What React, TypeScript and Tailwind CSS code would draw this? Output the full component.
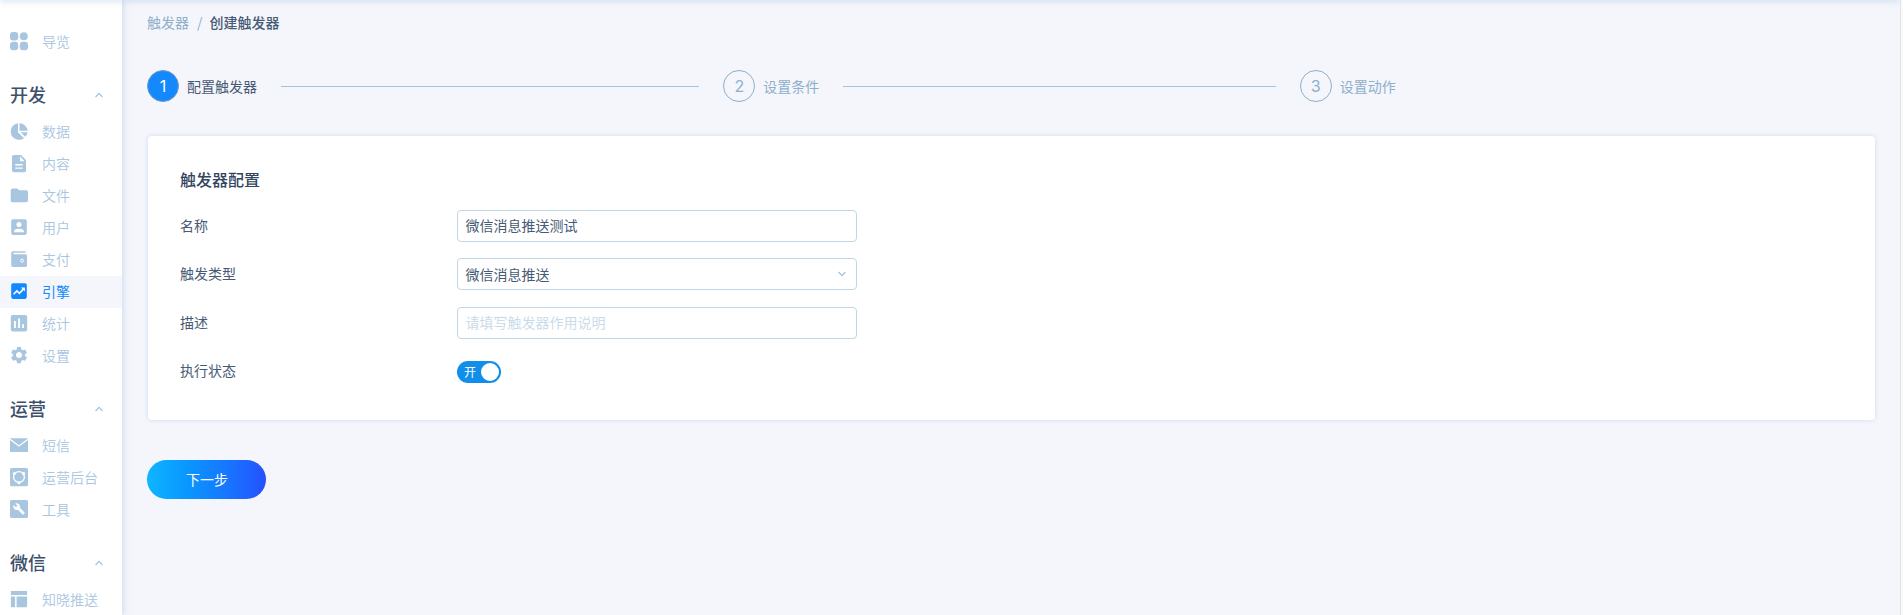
import React from "react";

type IconProps = { children: React.ReactNode };

function Glyph({ children }: IconProps) {
  return (
    <svg viewBox="0 0 20 20" width="20" height="20" className="block shrink-0" fill="currentColor">
      {children}
    </svg>
  );
}

const icons = {
  overview: (
    <Glyph>
      <rect x="1" y="0" width="8.2" height="8.4" rx="3" />
      <rect x="10.8" y="0.200" width="8" height="8" rx="4" />
      <rect x="1" y="9.8" width="8.2" height="8.4" rx="3" />
      <rect x="10.8" y="9.8" width="8.2" height="8.4" rx="3" />
    </Glyph>
  ),
  data: (
    <Glyph>
      <path d="M9 1.3v8.9l6 6A8.3 8.3 0 1 1 9 1.3z" />
      <path d="M10.5 1.3a8.3 8.3 0 0 1 8.2 7.4h-8.2z" />
      <path d="M11.6 10.2h7.1a8 8 0 0 1-2.6 4.6z" />
    </Glyph>
  ),
  content: (
    <Glyph>
      <path
        fillRule="evenodd"
        d="M5 1h7l5 5v10.5a1.8 1.8 0 0 1-1.8 1.8H4.8A1.8 1.8 0 0 1 3 16.500V2.800A1.800 1.800 0 0 1 4.800 1zM11 2.500v4.700h4.700zM6.300 10v1.400h7.400V10zm0 3.400v1.400h7.400v-1.400z"
      />
    </Glyph>
  ),
  folder: (
    <Glyph>
      <path d="M3.500 2.500h4.700l2 1.800h7a1.800 1.800 0 0 1 1.800 1.800v8.400a1.800 1.800 0 0 1-1.800 1.800H3.500a1.800 1.800 0 0 1-1.800-1.800V4.300a1.800 1.800 0 0 1 1.800-1.800z" />
    </Glyph>
  ),
  user: (
    <Glyph>
      <rect x="2.200" y="1.300" width="15.600" height="15.600" rx="1.800" />
      <circle cx="10" cy="6.600" r="2.500" fill="#fff" />
      <path d="M5 14.200v-.9c0-1.700 3.300-2.500 5-2.500s5 .8 5 2.500v.9z" fill="#fff" />
    </Glyph>
  ),
  pay: (
    <Glyph>
      <path d="M3.900 1.200h12.700v1.600H4.500v1.500h12a1.500 1.500 0 0 1 1.500 1.500v9.700a1.500 1.500 0 0 1-1.500 1.500H3.900a1.700 1.700 0 0 1-1.700-1.700V2.900a1.700 1.700 0 0 1 1.700-1.700z" />
      <circle cx="13.100" cy="10.600" r="1.500" fill="none" stroke="#fff" strokeWidth="1" />
    </Glyph>
  ),
  engine: (
    <Glyph>
      <rect x="2.200" y="1.300" width="15.600" height="15.600" rx="1.800" />
      <path d="M4.600 12.300l3.300-3.400 2.500 2.400 4.300-4.400" fill="none" stroke="#fff" strokeWidth="1.600" />
      <path d="M11.800 5.400h4.100v4z" fill="#fff" />
    </Glyph>
  ),
  stats: (
    <Glyph>
      <rect x="1.800" y="1" width="16.400" height="16.400" rx="1.800" />
      <path d="M5 7h1.900v7H5zM9.100 4.500H11V14H9.100zM13.100 10.200H15V14h-1.900z" fill="#fff" />
    </Glyph>
  ),
  gear: (
    <Glyph>
      <path
        transform="translate(-1 -2) scale(.84) translate(1.100 1.200)"
        d="M19.140 12.940c.040-.300.060-.610.060-.940 0-.320-.020-.640-.070-.940l2.030-1.580c.180-.140.230-.410.120-.610l-1.920-3.320c-.120-.220-.370-.290-.590-.220l-2.390.960c-.500-.380-1.030-.700-1.620-.940l-.360-2.540c-.040-.240-.240-.410-.480-.410h-3.840c-.240 0-.430.170-.470.410l-.360 2.540c-.590.240-1.130.570-1.620.940l-2.390-.960c-.220-.080-.470 0-.590.220L2.740 8.870c-.120.210-.080.470.120.610l2.030 1.580c-.050.300-.090.630-.090.940s.020.640.070.940l-2.030 1.580c-.180.140-.230.410-.120.610l1.920 3.320c.120.220.370.290.590.220l2.390-.960c.500.380 1.030.700 1.620.940l.360 2.540c.050.240.240.410.480.410h3.840c.240 0 .440-.170.470-.410l.360-2.540c.590-.240 1.130-.560 1.620-.940l2.390.960c.220.080.470 0 .590-.220l1.920-3.320c.120-.220.070-.470-.120-.610l-2.010-1.580zM12 15.600c-1.980 0-3.600-1.620-3.600-3.600s1.620-3.600 3.600-3.600 3.600 1.620 3.600 3.600-1.620 3.600-3.600 3.600z"
      />
    </Glyph>
  ),
  mail: (
    <Glyph>
      <rect x="1" y="2.300" width="18" height="13.700" rx=".8" />
      <path d="M1 3.300l9 6.600 9-6.600" fill="none" stroke="#fff" strokeWidth="1.300" />
    </Glyph>
  ),
  backend: (
    <Glyph>
      <rect x="1" y="0" width="18" height="18.300" rx="1.600" />
      <circle cx="10" cy="9" r="5.400" fill="none" stroke="#fff" strokeWidth="1.300" />
      <circle cx="5.300" cy="5.400" r="1.500" fill="#fff" />
      <circle cx="14.700" cy="5.400" r="1.500" fill="#fff" />
      <circle cx="10" cy="14.800" r="1.500" fill="#fff" />
    </Glyph>
  ),
  tools: (
    <Glyph>
      <rect x="1" y="0" width="18" height="18" rx="1.600" />
      <path
        transform="translate(3.800 2.600) scale(.52)"
        fill="#fff"
        d="M22.700 19l-9.100-9.100c.9-2.300.4-5-1.500-6.900-2-2-5-2.400-7.400-1.300L9 6 6 9 1.600 4.700C.4 7.100.9 10.100 2.900 12.100c1.900 1.900 4.600 2.400 6.900 1.500l9.100 9.100c.4.400 1 .4 1.400 0l2.300-2.300c.5-.4.500-1.100.1-1.400z"
      />
    </Glyph>
  ),
  layout: (
    <Glyph>
      <path d="M1.900 1h16.200v4H1.900zM1.900 6.500h4.200v10.700H2.600a.7.700 0 0 1-.7-.7zM7.600 6.500h10.500v10a.7.700 0 0 1-.7.700H7.600z" />
    </Glyph>
  ),
};

type Item = { label: string; icon: keyof typeof icons; active?: boolean };

const groups: { title: string; items: Item[] }[] = [
  {
    title: "开发",
    items: [
      { label: "数据", icon: "data" },
      { label: "内容", icon: "content" },
      { label: "文件", icon: "folder" },
      { label: "用户", icon: "user" },
      { label: "支付", icon: "pay" },
      { label: "引擎", icon: "engine", active: true },
      { label: "统计", icon: "stats" },
      { label: "设置", icon: "gear" },
    ],
  },
  {
    title: "运营",
    items: [
      { label: "短信", icon: "mail" },
      { label: "运营后台", icon: "backend" },
      { label: "工具", icon: "tools" },
    ],
  },
  { title: "微信", items: [{ label: "知晓推送", icon: "layout" }] },
];

function NavItem({ label, icon, active }: Item) {
  return (
    <a
      className={`flex h-8 shrink-0 items-center gap-[13px] pl-[9px] text-sm whitespace-nowrap ${
        active ? "bg-[#f4f6fb] font-normal text-[#1389fd]" : "font-[350] text-[#a9c6e0]"
      }`}
    >
      {icons[icon]}
      <span className="pb-0.5">{label}</span>
    </a>
  );
}

function Sidebar() {
  return (
    <nav className="z-10 flex w-[122px] shrink-0 flex-col overflow-hidden bg-white pt-[26px] shadow-[1px_0_6px_rgba(160,190,225,0.5)]">
      <NavItem label="导览" icon="overview" />
      {groups.map((g) => (
        <section key={g.title} className="shrink-0">
          <h2 className="flex h-[58px] items-center justify-between pt-4 pr-[19px] pl-2.5 text-lg font-medium text-[#3d4f6b]">
            <span className="pb-[3px]">{g.title}</span>
            <svg viewBox="0 0 8 6" width="8" height="6" fill="none" stroke="#a0c0dc" strokeWidth="1.100">
              <path d="M.6 5L4 1.400 7.400 5" />
            </svg>
          </h2>
          {g.items.map((it) => (
            <NavItem key={it.label} {...it} />
          ))}
        </section>
      ))}
    </nav>
  );
}

const steps = ["配置触发器", "设置条件", "设置动作"];

function Steps() {
  return (
    <ol className="mt-[37px] grid grid-cols-3">
      {steps.map((label, i) => (
        <li key={label} className="flex h-8 items-center">
          <span
            className={`flex size-8 shrink-0 items-center justify-center rounded-full border font-[Inter,sans-serif] text-base font-normal ${
              i === 0 ? "border-[#6f9cc8] bg-[#1389fd] text-white" : "border-[#8eafcb] text-[#8eafcb]"
            }`}
          >
            {i + 1}
          </span>
          <span className={`ml-2 text-sm ${i === 0 ? "text-[#475a75]" : "text-[#8eafcb]"}`}>{label}</span>
          {i < 2 && <span className="mx-6 h-px flex-1 bg-[#a3c4df]" />}
        </li>
      ))}
    </ol>
  );
}

function Field({ label, children }: { label: string; children: React.ReactNode }) {
  return (
    <div className="flex h-8 items-center">
      <label className="w-[277px] shrink-0 pb-0.5 text-sm text-[#475a75]">{label}</label>
      {children}
    </div>
  );
}

const box = "h-8 w-[400px] rounded border border-[#c0d7e7] bg-white pl-[7.5px] text-sm text-[#475a75]";

export default function App() {
  return (
    <div className='flex h-[615px] w-full overflow-hidden bg-[#fafafa] font-["Noto_Sans_CJK_SC",sans-serif]'>
      <div className="relative flex flex-1 overflow-hidden bg-[#f4f6fb]">
        <Sidebar />
        <main className="flex flex-1 flex-col pt-[11px] pr-6 pl-[25px]">
          <div className="flex h-[22px] items-center text-sm text-[#8eafcb]">
            <span>触发器</span>
            <span className="mx-2 w-[4.5px] text-center">/</span>
            <span className="font-medium text-[#475a75]">创建触发器</span>
          </div>
          <Steps />
          <section className="mt-[34px] mr-px ml-px h-[284px] rounded bg-white px-8 pt-8 shadow-[0_0_4px_rgba(170,200,230,0.6)]">
            <h1 className="flex h-[26px] items-center pb-1 text-base font-medium text-[#33455f]">触发器配置</h1>
            <div className="mt-4 flex flex-col gap-4">
              <Field label="名称">
                <input className={`${box} pb-0.5`} defaultValue="微信消息推送测试" />
              </Field>
              <Field label="触发类型">
                <button className={`${box} flex items-center justify-between pr-2.5`}>
                  微信消息推送
                  <svg viewBox="0 0 8 6" width="8" height="6" fill="none" stroke="#a0c0dc" strokeWidth="1.200">
                    <path d="M.6 1L4 4.600 7.400 1" />
                  </svg>
                </button>
              </Field>
              <div className="pt-px">
                <Field label="描述">
                  <input className={`${box} pb-0.5 font-[350] placeholder:text-[#c6d9e9]`} placeholder="请填写触发器作用说明" />
                </Field>
              </div>
              <Field label="执行状态">
                <button className="mt-0.5 flex h-[22px] w-11 items-center justify-between rounded-full bg-[#118eea] pr-0.5 pl-[7px] text-xs text-white">
                  开<span className="size-[18px] rounded-full bg-white" />
                </button>
              </Field>
            </div>
          </section>
          <button className="mt-[40.4px] ml-[0.4px] flex h-[39px] w-[119px] items-center justify-center rounded-full bg-linear-to-r from-[#10b5ff] to-[#2550ff] pb-0.5 text-sm text-white">
            下一步
          </button>
        </main>
        <div className="pointer-events-none absolute inset-x-0 -top-1 z-20 h-1 shadow-[0_1px_6px_rgba(150,185,225,0.5)]" />
      </div>
      <div className="w-[3px] shrink-0 border-l border-[#e4e4e4]" />
    </div>
  );
}
